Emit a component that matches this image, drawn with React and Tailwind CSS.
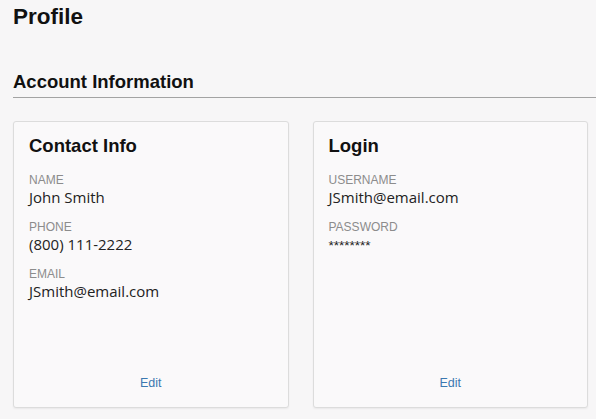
const Field = ({ label, value, mono }) => (
  <div className="flex flex-col">
    <div className="text-[12px] leading-[14px] text-[#8c8c8c] font-['Liberation_Sans',Arial,sans-serif] uppercase">
      {label}
    </div>
    {mono ? (
      <div className="text-[13.5px] leading-[20px] text-[#222] font-['Liberation_Sans',Arial,sans-serif] pt-[2px]">
        {value}
      </div>
    ) : (
      <div className="text-[15px] leading-[20px] text-[#222] font-['Open_Sans',sans-serif]">{value}</div>
    )}
  </div>
);

const Card = ({ title, children }) => (
  <div className="h-[287px] flex flex-col border border-[#dcdcdc] rounded-[3px] bg-[#faf9fa] shadow-[0_1px_2px_rgba(0,0,0,0.06)] px-[15px] pt-[13px] pb-[13px]">
    <h3 className="text-[18.5px] leading-[22px] font-bold text-[#111]">{title}</h3>
    <div className="flex flex-col gap-[13px] mt-[16px]">{children}</div>
    <div className="mt-auto text-center">
      <a href="#" className="text-[12.5px] leading-[14px] text-[#3b78b0]">
        Edit
      </a>
    </div>
  </div>
);

export default function App() {
  return (
    <div className="min-h-screen bg-[#f7f6f7] pl-[13px] pt-[4px] font-['Liberation_Sans',Arial,sans-serif]">
      <h1 className="text-[22.5px] leading-[26px] font-bold text-[#111]">Profile</h1>

      <h2 className="mt-[41px] text-[18.5px] leading-[22px] font-bold text-[#111] pb-[4px] border-b border-[#a3a3a3]">
        Account Information
      </h2>

      <div className="grid grid-cols-2 gap-[24px] mt-[23px] pr-[8px]">
        <Card title="Contact Info">
          <Field label="Name" value="John Smith" />
          <Field label="Phone" value="(800) 111-2222" />
          <Field label="Email" value="JSmith@email.com" />
        </Card>
        <Card title="Login">
          <Field label="Username" value="JSmith@email.com" />
          <Field label="Password" value="********" mono />
        </Card>
      </div>
    </div>
  );
}
